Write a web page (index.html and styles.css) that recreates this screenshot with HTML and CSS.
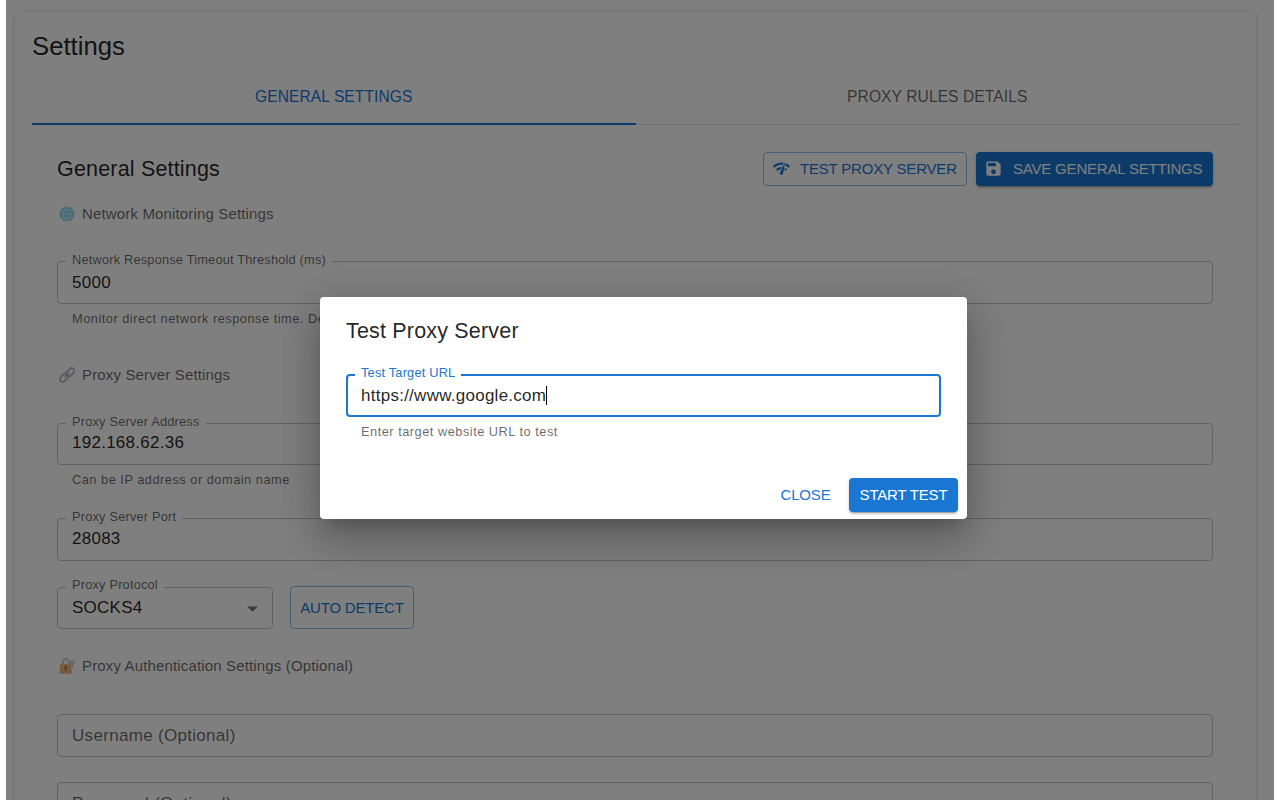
FILE: index.html
```html
<!DOCTYPE html>
<html lang="en">
<head>
<meta charset="utf-8">
<title>Settings</title>
<link rel="stylesheet" href="styles.css">
</head>
<body>
<div class="app">
  <main class="card">
    <h1 class="card-title">Settings</h1>
    <nav class="tabs">
      <div class="tab active"><span>GENERAL SETTINGS</span></div>
      <div class="tab"><span>PROXY RULES DETAILS</span></div>
    </nav>
    <section class="panel">
      <header class="panel-head">
        <h2 class="heading">General Settings</h2>
        <button class="btn outlined test"><svg class="btn-icon" viewBox="0 0 24 24"><path d="M15.9 5c-.17 0-.32.09-.41.23l-.07.15-5.18 11.65c-.16.29-.26.61-.26.96 0 1.11.9 2.01 2.01 2.01.96 0 1.77-.68 1.96-1.59l.01-.03L16.4 5.5c0-.28-.22-.5-.5-.5zM1 9l2 2c2.88-2.88 6.79-4.08 10.53-3.62l1.19-2.68C9.89 3.84 4.74 5.27 1 9zm20 2 2-2c-1.64-1.64-3.55-2.82-5.59-3.57l-.53 2.82c1.5.62 2.9 1.53 4.12 2.75zm-4 4 2-2c-.8-.8-1.7-1.42-2.66-1.89l-.55 2.92c.42.27.83.59 1.21.97zM5 13l2 2c1.13-1.13 2.56-1.79 4.03-2l1.28-2.88c-2.63-.08-5.3.87-7.31 2.88z"/></svg><span>TEST PROXY SERVER</span></button>
        <button class="btn contained save"><svg class="btn-icon" viewBox="0 0 24 24"><path d="M17 3H5c-1.11 0-2 .9-2 2v14c0 1.1.89 2 2 2h14c1.1 0 2-.9 2-2V7l-4-4zm-5 16c-1.66 0-3-1.34-3-3s1.34-3 3-3 3 1.34 3 3-1.34 3-3 3zm3-10H5V5h10v4z"/></svg><span>SAVE GENERAL SETTINGS</span></button>
      </header>

      <h3 class="group first"><svg class="emoji" viewBox="0 0 16 16"><circle cx="8" cy="8" r="7.5" fill="#59c3ee"/><path d="M8 .5v15M.5 8h15M2 4h12M2 12h12M8 .5C3 4 3 12 8 15.5M8 .5c5 3.500 5 11.500 0 15" fill="none" stroke="#c9ecfa" stroke-width=".9"/></svg><span>Network Monitoring Settings</span></h3>
      <div class="field timeout"><span class="label">Network Response Timeout Threshold (ms)</span><span class="value">5000</span></div>
      <p class="helper">Monitor direct network response time. Default 5000ms</p>

      <h3 class="group proxy"><svg class="emoji" viewBox="0 0 16 16"><g fill="none" stroke="#a4a4b0" stroke-width="2"><rect x="6.700" y="2.600" width="9" height="5.400" rx="2.700" transform="rotate(-45 11.200 5.300)"/><rect x=".4" y="8.200" width="9" height="5.400" rx="2.700" transform="rotate(-45 4.900 10.900)"/><path d="M5.800 10.200l4.400-4.400"/></g></svg><span>Proxy Server Settings</span></h3>
      <div class="field address"><span class="label">Proxy Server Address</span><span class="value">192.168.62.36</span></div>
      <p class="helper">Can be IP address or domain name</p>
      <div class="field port"><span class="label">Proxy Server Port</span><span class="value">28083</span></div>
      <div class="protocol">
        <div class="field select"><span class="label">Proxy Protocol</span><span class="value">SOCKS4</span><svg class="arrow" viewBox="0 0 24 24"><path d="M7 10l5 5 5-5z"/></svg></div>
        <button class="btn outlined detect"><span>AUTO DETECT</span></button>
      </div>

      <h3 class="group auth"><svg class="emoji" viewBox="0 0 16 16"><path d="M3.700 7V4.500a3 3.500 0 0 1 6 0V7" fill="none" stroke="#b5aa9c" stroke-width="1.600"/><rect x=".8" y="6" width="11.800" height="9.500" rx="1" fill="#f2a84c"/><path d="M.8 12h11.800v2.500a1 1 0 0 1-1 1H1.800a1 1 0 0 1-1-1z" fill="#e8905a"/><circle cx="6.700" cy="9.500" r="1.400" fill="#704c38"/><path d="M6.100 10h1.200v3H6.100z" fill="#704c38"/><circle cx="13.300" cy="4.500" r="1.700" fill="none" stroke="#aaa7b7" stroke-width="1.300"/><path d="M13.300 6v4" stroke="#aaa7b7" stroke-width="1.300"/></svg><span>Proxy Authentication Settings (Optional)</span></h3>
      <div class="field username"><span class="placeholder">Username (Optional)</span></div>
      <div class="field password"><span class="placeholder">Password (Optional)</span></div>
    </section>
  </main>
</div>
<div class="backdrop">
  <div class="dialog">
    <h2 class="heading dialog-title">Test Proxy Server</h2>
    <div class="field focused"><span class="label">Test Target URL</span><span class="value">https://www.google.com</span><span class="caret"></span></div>
    <p class="helper">Enter target website URL to test</p>
    <footer class="actions">
      <button class="btn text close"><span>CLOSE</span></button>
      <button class="btn contained start"><span>START TEST</span></button>
    </footer>
  </div>
</div>
</body>
</html>
```

FILE: styles.css
```css
* { box-sizing: border-box; }
html, body { margin: 0; height: 100%; overflow: hidden; }
body {
  position: relative;
  width: 1280px;
  height: 800px;
  background: #fff;
  color: rgba(0, 0, 0, .87);
  font-family: "Liberation Sans", Arial, sans-serif;
}
h1, h2, h3, p { margin: 0; font-weight: 400; }
span { white-space: nowrap; }

.app { height: 800px; margin: 0 6px; padding: 12px 18px 0 9px; overflow: hidden; }
.card {
  height: 900px;
  padding: 17px;
  border-radius: 4px;
  background: #fff;
  box-shadow: 0 2px 1px -1px rgba(0,0,0,.2), 0 1px 1px rgba(0,0,0,.14), 0 1px 4px rgba(0,0,0,.2);
}
.card-title { height: 41px; font-size: 25.700px; line-height: 34px; }

.tabs { display: flex; height: 55px; border-bottom: 1px solid rgba(0,0,0,.12); }
.tab {
  flex: 1;
  display: flex;
  align-items: center;
  justify-content: center;
  height: 55px;
  color: rgba(0,0,0,.6);
  font-size: 15.600px;
  letter-spacing: .08px;
  border-bottom: 2px solid transparent;
}
.tab.active { color: #1976d2; border-color: #1976d2; }

.panel { padding: 27px 26px 0 25px; }
.panel-head { display: flex; align-items: center; height: 34px; }
.heading { flex: 1; font-size: 21.500px; line-height: 34px; letter-spacing: .18px; }
.panel-head .heading { padding-bottom: 1px; }

.btn {
  display: flex;
  align-items: center;
  justify-content: center;
  height: 34px;
  padding: 0 9px 2px;
  border: 0;
  border-radius: 4px;
  background: none;
  color: #1976d2;
  font: 15px "Liberation Sans", Arial, sans-serif;
  letter-spacing: -.19px;
}
.outlined { border: 1px solid rgba(25,118,210,.5); }
.contained {
  background: #1976d2;
  color: #fff;
  box-shadow: 0 3px 1px -2px rgba(0,0,0,.2), 0 2px 2px rgba(0,0,0,.14), 0 1px 5px rgba(0,0,0,.12);
}
.btn-icon { flex: none; width: 19px; height: 19px; margin-right: 9px; fill: currentColor; }
.test { width: 204px; margin-right: 9px; justify-content: flex-start; padding-left: 8px; }
.save { width: 237px; justify-content: flex-start; padding-left: 8px; }
.save .btn-icon { margin-right: 10px; }

.group {
  display: flex;
  align-items: center;
  height: 24px;
  padding-left: 2px;
  color: rgba(0,0,0,.6);
  font-size: 15px;
  letter-spacing: .15px;
}
.group span { padding-bottom: 2px; }
.emoji { width: 16px; height: 16px; margin-right: 7px; opacity: .75; }
.first { margin-top: 16px; }

.field {
  position: relative;
  display: flex;
  align-items: center;
  height: 43px;
  padding: 0 14px;
  border: 1px solid rgba(0,0,0,.23);
  border-radius: 4px;
}
.label {
  position: absolute;
  top: -10px;
  left: 8px;
  padding: 0 6px;
  background: #fff;
  color: rgba(0,0,0,.6);
  font-size: 12.800px;
  line-height: 15px;
  letter-spacing: .19px;
}
.value { font-size: 17px; line-height: 22px; letter-spacing: .26px; }
.placeholder { color: rgba(0,0,0,.6); font-size: 17px; letter-spacing: .31px; }
.helper { padding-left: 15px; color: rgba(0,0,0,.6); font-size: 12.800px; line-height: 20px; letter-spacing: .5px; white-space: nowrap; }

.timeout { margin: 35px 0 5px; }
.proxy { margin-top: 34px; }
.address { height: 42px; margin: 36px 0 5px; }
.address .value { padding-bottom: 2px; }
.port { margin-top: 28px; }
.port .value { padding-bottom: 1px; }
.protocol { display: flex; align-items: flex-end; gap: 17px; margin-top: 25px; }
.select { width: 216px; height: 42px; justify-content: space-between; padding-right: 7px; }
.select .label { top: -11px; }
.arrow { width: 25px; height: 25px; fill: rgba(0,0,0,.54); }
.detect { width: 124px; height: 43px; padding-bottom: 1px; }
.auth { margin-top: 25px; }
.username { margin-top: 36px; }
.password { margin-top: 25px; }

.backdrop {
  position: absolute;
  inset: 0 6px;
  background: rgba(0,0,0,.5);
  overflow: hidden;
}
.dialog {
  width: 647px;
  height: 222px;
  margin: 297px 0 0 314px;
  padding: 17px 26px 8px;
  border-radius: 4px;
  background: #fff;
  box-shadow: 0 11px 15px -7px rgba(0,0,0,.2), 0 24px 38px 3px rgba(0,0,0,.14), 0 9px 46px 8px rgba(0,0,0,.12);
}
.focused { margin: 26px 0 5px; padding: 0 13px; border: 2px solid #1976d2; }
.focused .label { top: -11px; left: 7px; color: #1976d2; }
.caret { width: 1px; height: 19px; background: #000; }
.actions { display: flex; justify-content: flex-end; gap: 9px; margin: 36px -17px 0 0; }
.close { width: 69px; }
.start { width: 109px; }
```
